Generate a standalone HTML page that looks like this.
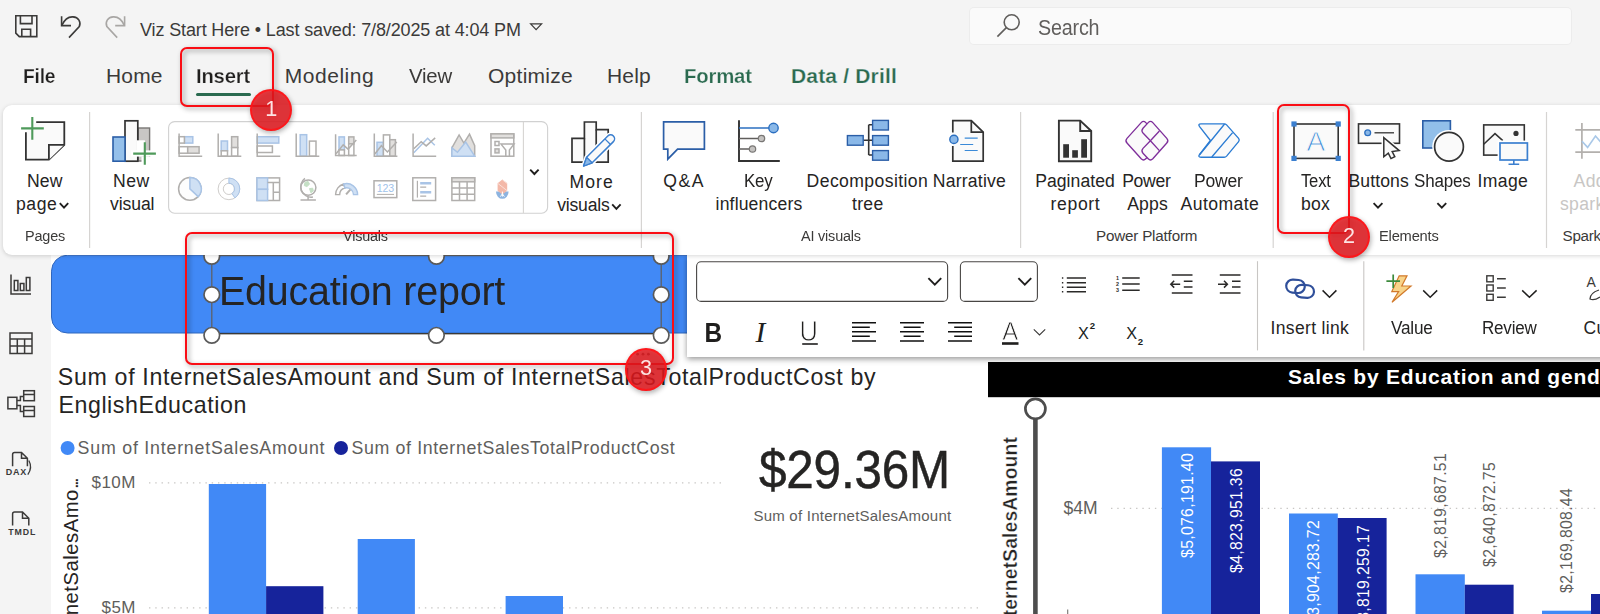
<!DOCTYPE html>
<html><head><meta charset="utf-8"><title>Power BI Desktop</title>
<style>
html,body{margin:0;padding:0;}
body{width:1600px;height:614px;overflow:hidden;position:relative;background:#f4f4f4;font-family:"Liberation Sans",sans-serif;}
.t{position:absolute;white-space:nowrap;line-height:1;}
.abs{position:absolute;}
.layer{position:absolute;left:0;top:0;width:1600px;height:614px;overflow:hidden;}
svg{position:absolute;left:0;top:0;overflow:visible;}
.rot{position:absolute;white-space:nowrap;line-height:1;transform-origin:0 0;transform:rotate(-90deg) translate(-100%,0);}
.dl{font-size:15.8px;letter-spacing:.3px}
</style></head><body>
<!-- ===== canvas layer ===== -->
<div class="layer" id="canvas">
<div class="abs" style="left:51px;top:250px;width:1549px;height:364px;background:#fff"></div>
<svg width="1600" height="614" viewBox="0 0 1600 614">
<!-- blue banner -->
<path d="M67.5 255.2H700V333H67.5A16 16 0 0 1 51.5 317V271.2A16 16 0 0 1 67.5 255.2Z" fill="#4189f6" stroke="#2f66bd" stroke-width="1"/>
<!-- text box frame -->
<rect x="211.8" y="255.6" width="449.4" height="78" fill="none" stroke="#605e5c" stroke-width="1.2"/>
<line x1="212" y1="333.6" x2="661" y2="333.6" stroke="#3b3a39" stroke-width="1.4"/>
<g fill="#fff" stroke="#5a5a5a" stroke-width="1.7">
<circle cx="211.8" cy="256.3" r="7.8"/><circle cx="436.4" cy="256.3" r="7.8"/><circle cx="661.2" cy="256.3" r="7.8"/>
<circle cx="211.8" cy="294.7" r="7.8"/><circle cx="661.2" cy="294.7" r="7.8"/>
<circle cx="211.8" cy="335.3" r="7.8"/><circle cx="436.4" cy="335.3" r="7.8"/><circle cx="661.2" cy="335.3" r="7.8"/>
</g>
<g fill="#605e5c"><circle cx="637.6" cy="354.2" r="1.4"/><circle cx="643" cy="354.2" r="1.4"/><circle cx="648.4" cy="354.2" r="1.4"/></g>
<!-- left chart -->
<circle cx="67.6" cy="448" r="7" fill="#4189f6"/>
<circle cx="341" cy="448" r="7" fill="#16239b"/>
<g stroke="#c8c6c4" stroke-width="1.3" stroke-dasharray="1.4 4.87" fill="none">
<line x1="149" y1="482.8" x2="722" y2="482.8"/>
<line x1="149" y1="607.8" x2="980" y2="607.8"/>
<line x1="1111" y1="508.3" x2="1600" y2="508.3"/>
</g>
<g fill="#4189f6">
<rect x="208.8" y="484" width="57.3" height="140"/>
<rect x="357.7" y="539" width="57.2" height="80"/>
<rect x="505.6" y="596" width="57.4" height="30"/>
</g>
<rect x="266.1" y="586.2" width="57.3" height="40" fill="#16239b"/>
<!-- right chart -->
<rect x="988" y="362" width="620" height="35.2" fill="#000"/>
<rect x="1033.1" y="417" width="4.6" height="200" fill="#4d4d4d"/>
<circle cx="1035.4" cy="408.8" r="10" fill="#fff" stroke="#4d4d4d" stroke-width="2.7"/>
<g fill="#4189f6">
<rect x="1161.9" y="447.3" width="49.2" height="170"/>
<rect x="1289" y="513.5" width="48.8" height="110"/>
<rect x="1415.5" y="574.3" width="49.3" height="50"/>
<rect x="1542" y="610.7" width="49" height="10"/>
</g>
<g fill="#16239b">
<rect x="1211" y="461.4" width="49" height="160"/>
<rect x="1337.7" y="518" width="48.9" height="100"/>
<rect x="1464.8" y="584.7" width="48.8" height="40"/>
<rect x="1591" y="594" width="20" height="30"/>
</g>
<rect x="1067" y="609.5" width="1.3" height="5" fill="#8a8886"/>
<!-- left nav icons -->
<g fill="none" stroke="#3b3a39" stroke-width="1.5">
<path d="M11 274.5V294H31"/><rect x="14.3" y="280.5" width="3.6" height="10"/><rect x="20.3" y="283.5" width="3.6" height="7"/><rect x="26.3" y="277.5" width="3.6" height="13"/>
<rect x="10" y="333" width="22" height="20.5"/><path d="M10 339H32M10 346H32M17.3 339V353.5M24.6 339V353.5"/>
<rect x="7.9" y="397.3" width="9" height="11.5"/><rect x="23.7" y="390.7" width="10.7" height="10"/><rect x="23.7" y="406.5" width="10.7" height="10"/><path d="M23.7 394.6H34.4M23.7 410.4H34.4M16.9 400.5H20.4V396.4H23.7M16.9 405.5H20.4V411.4H23.7"/>
<path d="M12.6 466.2V454.4A2 2 0 0 1 14.6 452.4H21.5L27.4 458.3V466.2M21.5 452.4V458.3H27.4"/><path d="M28.8 460.5Q32.8 467.5 27.8 474.6" stroke-width="1.3"/>
<path d="M12.6 525.6V514A2 2 0 0 1 14.6 512H22.5L28.8 518.3V525.6M22.5 512V518.3H28.8"/>
</g>
</svg>

<span class="t" style="left:219.06px;top:271.87px;font-size:40.2px;color:#252423;letter-spacing:-0.200px;transform:scaleX(0.9809);transform-origin:0 50%;">Education report</span>
<span class="t" style="left:57.80px;top:366.36px;font-size:23.2px;color:#252423;letter-spacing:0.663px;">Sum of InternetSalesAmount and Sum of InternetSalesTotalProductCost by</span>
<span class="t" style="left:58.40px;top:394.36px;font-size:23.2px;color:#252423;letter-spacing:0.581px;">EnglishEducation</span>
<span class="t" style="left:77.60px;top:439.93px;font-size:17.8px;color:#605e5c;letter-spacing:0.785px;">Sum of InternetSalesAmount</span>
<span class="t" style="left:351.60px;top:439.93px;font-size:17.8px;color:#605e5c;letter-spacing:0.620px;">Sum of InternetSalesTotalProductCost</span>
<span class="t" style="left:91.60px;top:474.21px;font-size:17px;color:#605e5c;letter-spacing:0.412px;">$10M</span>
<span class="t" style="left:101.60px;top:598.71px;font-size:17px;color:#605e5c;letter-spacing:0.345px;">$5M</span>
<span class="t" style="left:758.60px;top:441.69px;font-size:54px;color:#252423;letter-spacing:-0.200px;transform:scaleX(0.9153);transform-origin:0 50%;-webkit-text-stroke:.5px #252423;">$29.36M</span>
<span class="t" style="left:753.40px;top:507.90px;font-size:15px;color:#605e5c;letter-spacing:0.240px;">Sum of InternetSalesAmount</span>
<span class="t" style="left:1288.00px;top:366.22px;font-size:21px;color:#ffffff;font-weight:700;letter-spacing:0.773px;">Sales by Education and gender</span>
<span class="t" style="left:1063.60px;top:500.49px;font-size:17.5px;color:#605e5c;letter-spacing:-0.033px;">$4M</span>
<span class="t" style="left:5.80px;top:467.78px;font-size:9px;color:#3b3a39;font-weight:700;letter-spacing:0.700px;">DAX</span>
<span class="t" style="left:8.20px;top:528.35px;font-size:8.8px;color:#3b3a39;font-weight:700;letter-spacing:0.915px;">TMDL</span>
<span class="rot" style="left:61.3px;top:480.4px;font-size:20.3px;color:#252423;letter-spacing:.5px">Sum of InternetSalesAmo<span style="letter-spacing:-2.6px">...</span></span>
<span class="rot" style="left:1001px;top:436.6px;font-size:19.3px;font-weight:700;color:#252423;letter-spacing:.15px;-webkit-text-stroke:.35px #fff">Sum of InternetSalesAmount</span>
<span class="rot dl" style="left:1180.4px;top:453px;color:#fff;">$5,076,191.40</span>
<span class="rot dl" style="left:1228.8px;top:467.6px;color:#fff;">$4,823,951.36</span>
<span class="rot dl" style="left:1306.4px;top:520px;color:#fff;">$3,904,283.72</span>
<span class="rot dl" style="left:1355.6px;top:524.7px;color:#fff;">$3,819,259.17</span>
<span class="rot dl" style="left:1433.3px;top:452.8px;color:#605e5c;">$2,819,687.51</span>
<span class="rot dl" style="left:1482.1px;top:461.8px;color:#605e5c;">$2,640,872.75</span>
<span class="rot dl" style="left:1559.4px;top:488.2px;color:#605e5c;">$2,169,808.44</span>

</div>
<!-- ===== format toolbar ===== -->
<div class="layer" id="fmt">
<div class="abs" style="left:687px;top:255px;width:920px;height:101.5px;background:#fff;box-shadow:0 2px 6px rgba(0,0,0,.42)"></div>
<svg width="1600" height="614" viewBox="0 0 1600 614">
<!-- dropdowns -->
<rect x="696.6" y="261.8" width="251" height="39.6" rx="4.5" fill="#fff" stroke="#484644" stroke-width="1.1"/>
<rect x="960.4" y="261.8" width="77" height="39.6" rx="4.5" fill="#fff" stroke="#484644" stroke-width="1.1"/>
<g fill="none" stroke="#201f1e" stroke-width="1.9"><path d="M928.4 278.2L934.8 284.6L941.2 278.2"/><path d="M1018.4 278.2L1024.8 284.6L1031.2 278.2"/></g>
<!-- U underline + A bar -->
<rect x="802.2" y="343.2" width="15.6" height="1.6" fill="#201f1e"/>
<rect x="1002" y="342.2" width="16.5" height="2.6" fill="#201f1e"/>
<!-- align icons -->
<g stroke="#111" stroke-width="1.5" fill="none">
<path d="M852 322.7H876M852 327.2H869.8M852 331.7H876M852 336.2H869.8M852 341H876"/>
<path d="M900 322.7H924M903.6 327.2H920.6M900 331.7H924M903.6 336.2H920.6M900 341H924"/>
<path d="M948 322.7H972M954.2 327.2H972M948 331.7H972M954.2 336.2H972M948 341H972"/>
</g>
<path d="M1033.8 329.4L1039.5 335L1045.2 329.4" fill="none" stroke="#3b3a39" stroke-width="1.1"/>
<!-- list icons -->
<g stroke="#2b2a29" stroke-width="1.5" fill="none">
<path d="M1066.8 278H1086M1066.8 282.7H1086M1066.8 287.2H1086M1066.8 291.7H1086"/>
<path d="M1061.9 278H1063.3M1061.9 282.7H1063.3M1061.9 287.2H1063.3M1061.9 291.7H1063.3"/>
<path d="M1122.2 278H1139.7M1122.2 284H1139.7M1122.2 290.2H1139.7"/>
<path d="M1171.8 275H1192.5M1171.8 293H1192.5M1183.8 281.2H1192.5M1183.8 287H1192.5M1170.8 284.2H1180.2M1174.2 280.8L1170.8 284.2L1174.2 287.6"/>
<path d="M1219.8 275H1240.5M1219.8 293H1240.5M1232 281.2H1240.5M1232 287H1240.5M1218 284.2H1227.4M1224 280.8L1227.4 284.2L1224 287.6"/>
</g>
<!-- separators -->
<g stroke="#c8c6c4" stroke-width="1.1"><line x1="1257.5" y1="261.2" x2="1257.5" y2="350.4"/><line x1="1363.8" y1="261.2" x2="1363.8" y2="350.4"/></g>
<!-- link -->
<g fill="none" stroke="#2f4f9a" stroke-width="2.2"><rect x="1286.2" y="279.8" width="18.6" height="13" rx="6.5" transform="rotate(4 1295.5 286.3)"/><rect x="1295.2" y="285" width="18.8" height="12.6" rx="6.3" transform="rotate(4 1304.6 291.3)"/></g>
<g fill="none" stroke="#201f1e" stroke-width="1.5"><path d="M1322.6 290.4L1329.5 297.2L1336.4 290.4"/><path d="M1423.2 290.4L1430.2 297.2L1437.2 290.4"/><path d="M1522.2 290.4L1529.4 297.2L1536.6 290.4"/></g>
<!-- value -->
<path d="M1399.2 275.8H1407L1401.8 286H1411L1392 302.2L1398.6 291.6H1391.8Z" fill="#f8d48a" stroke="#d27a2c" stroke-width="1.2" stroke-linejoin="miter"/>
<path d="M1386.4 281.2H1400M1393.2 274.4V288" stroke="#3c8a3c" stroke-width="1.7" fill="none"/>
<!-- review -->
<g fill="none" stroke="#3b3a39" stroke-width="1.4"><rect x="1486.8" y="275.8" width="6.4" height="6"/><rect x="1486.8" y="285" width="6.4" height="6"/><rect x="1486.8" y="294.3" width="6.4" height="6"/><path d="M1497 278.8H1505.8M1497 288H1505.8M1497 297.3H1505.8"/></g>
<!-- Cu icon brush -->
<path d="M1599 290Q1590 293 1590 299Q1594 301 1600 297" fill="none" stroke="#3b3a39" stroke-width="1.3"/>
<text x="1586.6" y="287.2" font-family="'Liberation Sans', sans-serif" font-size="14" fill="#3b3a39">A</text>
<text font-family="'Liberation Sans', sans-serif" font-size="5.4" fill="#2b2a29" font-weight="700"><tspan x="1116" y="280">1</tspan><tspan x="1116" y="286">2</tspan><tspan x="1116" y="292.2">3</tspan></text>
</svg>

<span class="t" style="left:1270.60px;top:319.99px;font-size:17.5px;color:#252423;letter-spacing:0.326px;">Insert link</span>
<span class="t" style="left:1391.00px;top:319.99px;font-size:17.5px;color:#252423;letter-spacing:-0.200px;transform:scaleX(0.9829);transform-origin:0 50%;">Value</span>
<span class="t" style="left:1481.83px;top:319.99px;font-size:17.5px;color:#252423;letter-spacing:-0.200px;transform:scaleX(0.9725);transform-origin:0 50%;">Review</span>
<span class="t" style="left:1583.60px;top:319.99px;font-size:17.5px;color:#252423;letter-spacing:0.200px;">Custom</span>
<span class="t" style="left:703.80px;top:318.44px;font-size:28.3px;color:#201f1e;font-weight:700;transform:scaleX(.86);transform-origin:15% 50%;">B</span>
<span class="t" style="left:755.60px;top:317.83px;font-size:29.5px;color:#201f1e;font-style:italic;font-family:'Liberation Serif', serif;">I</span>
<span class="t" style="left:798.80px;top:316.24px;font-size:29.6px;color:#201f1e;-webkit-text-stroke:.9px #fff;transform:scaleX(.86);transform-origin:15% 50%;">U</span>
<span class="t" style="left:1001.80px;top:318.28px;font-size:26.6px;color:#201f1e;-webkit-text-stroke:.8px #fff;transform:scaleX(.9);transform-origin:15% 50%;">A</span>
<span class="t" style="left:1078.00px;top:325.09px;font-size:16.2px;color:#201f1e;">X</span>
<span class="t" style="left:1089.80px;top:320.97px;font-size:9.6px;color:#201f1e;font-weight:700;">2</span>
<span class="t" style="left:1126.20px;top:325.09px;font-size:16.2px;color:#201f1e;">X</span>
<span class="t" style="left:1137.80px;top:336.67px;font-size:9.6px;color:#201f1e;font-weight:700;">2</span>
</div>
<!-- ===== top + ribbon ===== -->
<div class="layer" id="top">
<div class="abs" style="left:0;top:0;width:1600px;height:105px;background:#f4f4f4"></div>
<div class="abs" style="left:970px;top:7.5px;width:601px;height:36px;background:#fafafa;border-radius:4px;box-shadow:0 0 0 1px #ececec"></div>
<div class="abs" style="left:196px;top:93px;width:55px;height:3.2px;border-radius:2px;background:#2a6a4f"></div>
<span class="t" style="left:140.00px;top:20.76px;font-size:18px;color:#3b3a39;letter-spacing:-0.132px;">Viz Start Here • Last saved: 7/8/2025 at 4:04 PM</span>
<span class="t" style="left:1038.20px;top:16.92px;font-size:21.6px;color:#605e5c;letter-spacing:-0.200px;transform:scaleX(0.9127);transform-origin:0 50%;">Search</span>
<span class="t" style="left:23.07px;top:65.32px;font-size:21px;color:#201f1e;font-weight:700;letter-spacing:-0.200px;transform:scaleX(0.9150);transform-origin:0 50%;-webkit-text-stroke:.25px #f4f4f4;">File</span>
<span class="t" style="left:106.00px;top:65.32px;font-size:21px;color:#3b3a39;letter-spacing:0.154px;">Home</span>
<span class="t" style="left:195.83px;top:65.32px;font-size:21px;color:#201f1e;font-weight:700;letter-spacing:-0.200px;transform:scaleX(0.9640);transform-origin:0 50%;-webkit-text-stroke:.25px #f4f4f4;">Insert</span>
<span class="t" style="left:284.80px;top:65.32px;font-size:21px;color:#3b3a39;letter-spacing:0.523px;">Modeling</span>
<span class="t" style="left:409.00px;top:65.32px;font-size:21px;color:#3b3a39;letter-spacing:-0.200px;transform:scaleX(0.9700);transform-origin:0 50%;">View</span>
<span class="t" style="left:488.00px;top:65.32px;font-size:21px;color:#3b3a39;letter-spacing:0.261px;">Optimize</span>
<span class="t" style="left:607.00px;top:65.32px;font-size:21px;color:#3b3a39;letter-spacing:0.163px;">Help</span>
<span class="t" style="left:684.04px;top:65.32px;font-size:21px;color:#2a6a4f;font-weight:700;letter-spacing:-0.200px;transform:scaleX(0.9686);transform-origin:0 50%;-webkit-text-stroke:.25px #f4f4f4;">Format</span>
<span class="t" style="left:791.00px;top:65.32px;font-size:21px;color:#2a6a4f;font-weight:700;letter-spacing:0.179px;-webkit-text-stroke:.25px #f4f4f4;">Data / Drill</span>
<div class="abs" style="left:2.5px;top:105px;width:1620px;height:149.8px;background:#fff;border-radius:9px;box-shadow:0 1px 4px rgba(0,0,0,.16)"></div>
<svg width="1600" height="614" viewBox="0 0 1600 614">
<!-- title bar icons -->
<g fill="none" stroke="#3b3a39" stroke-width="1.6">
<path d="M15.8 15.8H36.8V36.6H19.3L15.8 33.1Z"/><path d="M20.4 15.8V23.6H32V15.8"/><path d="M21.8 36.6V29.2H30.6V36.6"/>
<path d="M61.6 16.3V25.6H71"/><path d="M61.8 25.4C64.5 19.5 69 16.6 73 16.9C78.5 17.3 81.3 22 79.3 26.6L69 37.6"/>
</g>
<g fill="none" stroke="#a8a6a4" stroke-width="1.6">
<path d="M124.6 16.3V25.6H115.2"/><path d="M124.4 25.4C121.7 19.5 117.2 16.6 113.2 16.9C107.7 17.3 104.9 22 106.9 26.6L117.2 37.6"/>
</g>
<path d="M530.6 23.8H541.6L536.1 29.6Z" fill="none" stroke="#3b3a39" stroke-width="1.2"/>
<g fill="none" stroke="#605e5c" stroke-width="1.6"><circle cx="1011.7" cy="22.3" r="7.5"/><path d="M1006.4 27.6L997.4 36.6"/></g>
<!-- group separators -->
<g stroke="#d6d4d2" stroke-width="1.2">
<line x1="89.6" y1="112" x2="89.6" y2="248"/><line x1="641.4" y1="112" x2="641.4" y2="248"/><line x1="1020.6" y1="112" x2="1020.6" y2="248"/><line x1="1273.2" y1="112" x2="1273.2" y2="248"/><line x1="1546.5" y1="112" x2="1546.5" y2="248"/>
</g>
<!-- chevrons -->
<g fill="none" stroke="#201f1e" stroke-width="1.9">
<path d="M59.8 203.2L64 207.6L68.2 203.2"/><path d="M612.2 204.4L616.4 208.8L620.6 204.4"/><path d="M1373.6 203.2L1378 207.6L1382.4 203.2"/><path d="M1437.4 203.2L1441.8 207.6L1446.2 203.2"/>
</g>
<!-- New page -->
<path d="M36.2 122.1H64.3V144.8L48.9 159.7H25.9V132.2" fill="#fafafa" stroke="none"/>
<g fill="none" stroke="#333" stroke-width="1.8"><path d="M36.2 122.1H64.3V144.8L48.9 159.7H25.9V132.2"/><path d="M48.9 159.7V144.8H64.3" fill="#fafafa"/></g>
<path d="M21.1 128.4H43.8M32.3 117.1V139.8" stroke="#4f9a5b" stroke-width="2.1" fill="none"/>
<!-- New visual -->
<rect x="138" y="128" width="11.6" height="33" fill="#c8c6c4" stroke="#797775" stroke-width="1.4"/>
<rect x="125" y="120.8" width="12.8" height="40.4" fill="#fafafa" stroke="#333" stroke-width="1.7"/>
<rect x="113" y="137" width="12" height="24.2" fill="#95c0ea" stroke="#2b5ea7" stroke-width="1.6"/>
<rect x="136.6" y="140.3" width="8.3" height="11" fill="#fff"/><rect x="131" y="150.4" width="26" height="6.2" fill="#fff"/><rect x="141.5" y="156.6" width="9.5" height="6.4" fill="#fff"/>
<path d="M133.2 153.6H155.9M144.8 142.3V164.8" stroke="#4f9a5b" stroke-width="2.1" fill="none"/>
<!-- gallery box -->
<rect x="168.6" y="121.6" width="379" height="91.6" rx="6" fill="#fff" stroke="#d1d1d1" stroke-width="1.1"/>
<line x1="523.4" y1="122" x2="523.4" y2="213" stroke="#d6d4d2" stroke-width="1.1"/>
<g transform="translate(178.2 133.3)" fill="none" stroke="#b1afad" stroke-width="1.5"><rect x="6.2" y="3.4" width="8.4" height="6.4" fill="#cfe0f4" stroke="#a9c4e6"/><rect x="0.9" y="3.4" width="5.3" height="6.4" fill="#fff"/><rect x="0.9" y="13.4" width="8.6" height="6.5" fill="#fff"/><rect x="9.5" y="13.4" width="11.4" height="6.5" fill="#e1dfdd"/><path d="M0.9 0.3V22.9H24"/></g>
<g transform="translate(217.3 133.3)" fill="none" stroke="#b1afad" stroke-width="1.5"><rect x="3.9" y="7.7" width="6.3" height="9.8" fill="#cfe0f4" stroke="#a9c4e6"/><rect x="3.9" y="17.5" width="6.3" height="5.4" fill="#fff"/><rect x="14.3" y="3.4" width="6.2" height="10.9" fill="#e1dfdd"/><rect x="14.3" y="14.3" width="6.2" height="8.6" fill="#fff"/><path d="M0.9 0.3V22.9H24"/></g>
<g transform="translate(256.3 133.3)" fill="none" stroke="#b1afad" stroke-width="1.5"><rect x="0.9" y="3.4" width="21.6" height="6.4" fill="#cfe0f4" stroke="#a9c4e6"/><rect x="0.9" y="12.7" width="15.2" height="6.5" fill="#fff"/><path d="M0.9 0.3V22.9H24"/></g>
<g transform="translate(295.3 133.3)" fill="none" stroke="#b1afad" stroke-width="1.5"><rect x="4.9" y="1.4" width="6.5" height="21.5" fill="#cfe0f4" stroke="#a9c4e6"/><rect x="14.1" y="7.8" width="6.6" height="15.1" fill="#fff"/><path d="M0.9 0.3V22.9H24"/></g>
<g transform="translate(334.7 133.3)" fill="none" stroke="#b1afad" stroke-width="1.5"><rect x="4.3" y="3.6" width="5.4" height="13" fill="#cfe0f4" stroke="#a9c4e6"/><rect x="4.3" y="16.6" width="5.4" height="5.6" fill="#fff"/><rect x="14" y="3.6" width="5.2" height="7" fill="#e1dfdd"/><rect x="14" y="10.6" width="5.2" height="11.6" fill="#fff"/><path d="M1.4 20.4L8.5 11.6L13.4 15.8L21.6 6.6"/><path d="M0.9 1V22.2H22"/></g>
<g transform="translate(373.4 133.3)" fill="none" stroke="#b1afad" stroke-width="1.5"><rect x="3.6" y="9" width="6.4" height="13.9" fill="#cfe0f4" stroke="#a9c4e6"/><rect x="10" y="1.6" width="6.4" height="21.3" fill="#fff"/><rect x="16.4" y="6.4" width="5.6" height="16.5" fill="#e1dfdd"/><path d="M1.2 21L8 12.4L14 18.6L23.4 8.6"/><path d="M0.9 0.3V22.9H24"/></g>
<g transform="translate(412.2 133.3)" fill="none" stroke="#b1afad" stroke-width="1.5"><path d="M1.6 19.4L15.4 5L22.6 12" stroke="#a9c4e6"/><path d="M1.6 15.4L9 8.4L14 12.6L23 4.6"/><path d="M0.9 0.3V22.9H24"/></g>
<g transform="translate(451.3 133.3)" fill="none" stroke="#b1afad" stroke-width="1.5"><path d="M0.6 14.6L7.8 1.6L12.6 9.8L18.2 0.8L23.4 12.4V22.9H0.6Z" fill="#e1dfdd"/><path d="M0.6 14.6L6.2 19L14.4 8.8L23.4 22.9H0.6Z" fill="#cfe0f4" stroke="#a9c4e6"/></g>
<g transform="translate(490.4 133.3)" fill="none" stroke="#b1afad" stroke-width="1.5"><rect x="0.6" y="0.6" width="22.8" height="22.3" fill="#fff"/><rect x="0.6" y="0.6" width="22.8" height="4" fill="#e1dfdd"/><rect x="4.6" y="8.2" width="4" height="4" /><rect x="4.6" y="15.6" width="4" height="4" fill="#e1dfdd"/><path d="M10.6 10.8H23.6L19 16.8V22.9H15.4V16.8Z" fill="#fff"/></g>
<g transform="translate(178.2 177.2)" fill="none" stroke="#b1afad" stroke-width="1.5"><circle cx="11.7" cy="11.7" r="11.3" fill="#fdfdfd"/><path d="M11.7 11.7V0.4A11.3 11.3 0 0 1 20 19.4Z" fill="#cfe0f4" stroke="#a9c4e6"/></g>
<g transform="translate(217.3 177.2)" fill="none" stroke="#b1afad" stroke-width="1.5"><g stroke="#cfcdcb" stroke-width="1"><circle cx="11.6" cy="11.7" r="10.8"/><circle cx="11.6" cy="11.7" r="5.6"/></g><path d="M11.6 0.9A10.8 10.8 0 0 1 17.6 20.7L14.7 16.4A5.6 5.6 0 0 0 11.6 6.1Z" fill="#cfe0f4" stroke="#a9c4e6" stroke-width="1"/></g>
<g transform="translate(256.3 177.2)" fill="none" stroke="#b1afad" stroke-width="1.5"><rect x="0.7" y="0.7" width="22.6" height="22.6" fill="#fff"/><rect x="0.7" y="0.7" width="10.6" height="11.4" fill="#cfe0f4" stroke="#a9c4e6"/><rect x="0.7" y="12.1" width="10.6" height="11.2" fill="#cfe0f4" stroke="#a9c4e6"/><path d="M11.3 5.2H23.3M17 5.2V23.3M17 15H23.3"/></g>
<g transform="translate(295.3 177.2)" fill="none" stroke="#b1afad" stroke-width="1.5"><circle cx="13" cy="10.4" r="7.6" fill="#fff"/><path d="M9.6 5.2L12.8 4.2L14.2 7L11.6 9.4L9 8.4ZM14.2 11.4L17.4 11L18 13.6L15.6 15.6Z" fill="#c5e0c5" stroke="#c5e0c5" stroke-width="1"/><path d="M9.6 1.2A10.4 10.4 0 0 0 17.6 19.8"/><path d="M12.8 19.6V22.6M5.2 22.8H20.6"/></g>
<g transform="translate(334.7 177.2)" fill="none" stroke="#b1afad" stroke-width="1.5"><path d="M0.9 17.4A11 11 0 0 1 9 6.8L10.2 10.8A7 7 0 0 0 5 17.4Z" fill="#fff" stroke-width="1.4"/><path d="M9 6.8A11 11 0 0 1 22.9 17.4H18.8A7 7 0 0 0 10.2 10.8Z" fill="#cfe0f4" stroke="#a9c4e6" stroke-width="1.4"/><path d="M11.4 17.2L15.6 12.4" stroke-width="2"/></g>
<g transform="translate(373.4 177.2)" fill="none" stroke="#b1afad" stroke-width="1.5"><rect x="0.6" y="3.6" width="22.8" height="16.8" fill="#fff"/><path d="M3.4 17.2H20.6" stroke-width="1"/><text x="12" y="14.6" font-family="'Liberation Sans', sans-serif" font-size="10.6" fill="#9fc3ea" stroke="none" text-anchor="middle" letter-spacing="-.2">123</text></g>
<g transform="translate(412.2 177.2)" fill="none" stroke="#b1afad" stroke-width="1.5"><rect x="0.6" y="0.6" width="22.8" height="22.7" fill="#fff"/><path d="M5.2 3.6V20.4" stroke-width="1.2"/><path d="M8 6H19M8 15H19" stroke="#a9c4e6" stroke-width="2.4"/><path d="M8 10H14M8 19H14" stroke-width="1.2"/></g>
<g transform="translate(451.3 177.2)" fill="none" stroke="#b1afad" stroke-width="1.5"><rect x="0.6" y="0.6" width="22.8" height="22.7" fill="#fff"/><rect x="0.6" y="0.6" width="22.8" height="4" fill="#e1dfdd"/><path d="M0.6 10.8H23.4M0.6 17H23.4M8.2 4.6V23.3M15.8 4.6V23.3"/></g>
<g transform="translate(490.4 177.2)" fill="none" stroke="#b1afad" stroke-width="1.5"><path d="M5.6 14.2A6.3 7.4 0 0 0 18.2 14.2Z" fill="#8db4e0" stroke="none"/><path d="M12 2.4L16.8 6V13.6L12 17.2L7.2 13.6V6Z" fill="#f3b8a8" stroke="none"/><path d="M7.4 6.2L16.6 13.4M12 2.6L16.6 6.2" stroke="#fbe0d8" stroke-width="1"/><path d="M12 14.4V19.4M10 19.4L12 16.6L14 19.4" stroke="#fff" stroke-width="1" fill="none"/></g>
<path d="M530.2 169.6L534.4 174L538.6 169.6" fill="none" stroke="#201f1e" stroke-width="1.9"/>
<!-- More visuals -->
<g fill="#fafafa" stroke="#333" stroke-width="1.7"><path d="M572 162.2V138.4H584.4V122H596.2V129.6H608.2V162.2Z"/><path d="M584.4 138.4V162.2M596.2 129.6V162.2" /></g>
<g><path d="M583.6 166L586.6 157.2L607.8 136A3.9 3.9 0 0 1 613.4 141.6L592.2 162.8Z" fill="#fff" stroke="#fff" stroke-width="4.5"/>
<path d="M583.6 166L586.6 157.2L607.8 136A3.9 3.9 0 0 1 613.4 141.6L592.2 162.8Z" fill="#fafafa" stroke="#3b7fcf" stroke-width="1.5" stroke-linejoin="round"/>
<path d="M583.6 166L586.6 157.2L592.2 162.8Z" fill="#8ab8e8" stroke="#3b7fcf" stroke-width="1.3" stroke-linejoin="round"/><path d="M604.9 138.9L610.5 144.5" stroke="#3b7fcf" stroke-width="1.3"/></g>
<!-- Q&A -->
<path d="M663.6 121.8H704.4V149.2H677.6L667.8 159.2V149.2H663.6Z" fill="#fafafa" stroke="#2b5ea7" stroke-width="1.7"/>
<!-- Key influencers -->
<g fill="none"><path d="M739 120.2V161H779.8" stroke="#333" stroke-width="1.9"/>
<path d="M739 128H769" stroke="#2b6fc0" stroke-width="1.5"/><path d="M739 138.5H758.5M739 149H749.5" stroke="#605e5c" stroke-width="1.4"/>
<circle cx="773.5" cy="128" r="4.7" fill="#8ab8e8" stroke="#2b6fc0" stroke-width="1.4"/><circle cx="761.5" cy="138.5" r="3.2" fill="#c4c2c0" stroke="#797775" stroke-width="1.2"/><circle cx="752.5" cy="149" r="3.2" fill="#c4c2c0" stroke="#797775" stroke-width="1.2"/></g>
<!-- Decomposition tree -->
<path d="M863.3 140.3H872.4M868.7 124.7V155M868.7 124.7H872.4M868.7 155H872.4" stroke="#333" stroke-width="1.6" fill="none"/>
<g fill="#8ab8e8" stroke="#2b5ea7" stroke-width="1.4"><rect x="847.4" y="135.6" width="15.8" height="9.6"/><rect x="872.6" y="120.4" width="15.8" height="9.6"/><rect x="872.6" y="135.6" width="15.8" height="9.6"/><rect x="872.6" y="150.6" width="15.8" height="9.6"/></g>
<!-- Narrative -->
<path d="M952.8 132.5V120.6H971.3L983.2 132.2V161.2H952.8V146" fill="#fafafa" stroke="#333" stroke-width="1.7"/><path d="M971.3 120.6V132.2H983.2" fill="none" stroke="#333" stroke-width="1.7"/>
<circle cx="953.9" cy="139.4" r="4.1" fill="#8ab8e8" stroke="#2b6fc0" stroke-width="1.4"/>
<path d="M964.7 138.2H977.7M960.2 144.5H973.2M964.7 150.5H977.7" stroke="#3b8ad8" stroke-width="1.2" fill="none"/>
<!-- Paginated report -->
<path d="M1058.9 120.6H1080.2L1091.2 131V161.2H1058.9Z" fill="#fafafa" stroke="#333" stroke-width="1.9"/><path d="M1080.2 120.6V131H1091.2" fill="none" stroke="#333" stroke-width="1.9"/>
<g fill="#333"><rect x="1063.2" y="144.2" width="5.8" height="13.5"/><rect x="1072.2" y="150.2" width="5.7" height="7.5"/><rect x="1081.2" y="139.2" width="5.8" height="18.5"/></g>
<!-- Power Apps -->
<g fill="#fafafa" stroke="#7f2f9b" stroke-width="1.35" stroke-linejoin="round">
<path d="M1141.2 122.6Q1143.5 120.2 1145.8 122.6L1160.8 138.4Q1163 140.7 1160.8 143L1145.8 158.8Q1143.5 161.2 1141.2 158.8L1127 143Q1124.9 140.7 1127 138.4Z"/>
<path d="M1148.2 122.6Q1150.5 120.2 1152.8 122.6L1166.8 138.4Q1168.9 140.7 1166.8 143L1152.8 158.8Q1150.5 161.2 1148.2 158.8L1143 153.2Q1140.9 150.7 1143 148.4L1150.4 140.7L1143 133Q1140.9 130.7 1143 128.2Z"/>
<path d="M1150.4 140.7L1159.4 131M1150.4 140.7L1159.4 150.6" fill="none"/>
</g>
<!-- Power Automate -->
<g fill="#fafafa" stroke="#2b7cd3" stroke-width="1.35" stroke-linejoin="round">
<path d="M1201 123.8H1224.2Q1225.6 123.8 1226.6 124.9L1238.6 138.4Q1239.9 140 1238.6 141.6L1226.6 156.1Q1225.6 157.2 1224.2 157.2H1201Q1197.6 157.2 1199.6 154.4L1210.4 140.5L1199.6 126.6Q1197.6 123.8 1201 123.8Z"/>
<path d="M1224.6 124L1199.6 154.8M1232.6 132.6L1211.8 157" fill="none"/>
</g>
<!-- Text box -->
<rect x="1294" y="124" width="44.2" height="34.4" fill="#fafafa" stroke="#333" stroke-width="1.6"/>
<g fill="#3b7fcf"><rect x="1291.4" y="121.4" width="5.2" height="5.2"/><rect x="1335.6" y="121.4" width="5.2" height="5.2"/><rect x="1291.4" y="155.8" width="5.2" height="5.2"/><rect x="1335.6" y="155.8" width="5.2" height="5.2"/></g>
<text x="1315.9" y="151.2" font-family="'Liberation Sans', sans-serif" font-size="28" fill="#3b8ad8" text-anchor="middle" stroke="#fafafa" stroke-width=".9">A</text>
<!-- Buttons -->
<rect x="1358.5" y="123.9" width="41" height="19.4" fill="#fafafa" stroke="#333" stroke-width="1.6"/>
<circle cx="1367.7" cy="132.8" r="2.9" fill="#8ab8e8" stroke="#2b6fc0" stroke-width="1.3"/><path d="M1374.5 132.8H1394" stroke="#333" stroke-width="1.3"/>
<path d="M1383.8 137.7V156.8L1388.3 153.2L1391 158.6L1394.8 156.6L1392.2 151.6L1399.2 150.6Z" fill="#fff" stroke="#fff" stroke-width="4.5" stroke-linejoin="round"/>
<path d="M1383.8 137.7V156.8L1388.3 153.2L1391 158.6L1394.8 156.6L1392.2 151.6L1399.2 150.6Z" fill="#fafafa" stroke="#333" stroke-width="1.5" stroke-linejoin="miter"/>
<!-- Shapes -->
<rect x="1422.8" y="120.8" width="27.6" height="27.2" fill="#92bfe9" stroke="#2b5ea7" stroke-width="1.6"/>
<circle cx="1449" cy="146.7" r="16.8" fill="#fff"/><circle cx="1449" cy="146.7" r="14.4" fill="#fafafa" stroke="#333" stroke-width="1.7"/>
<!-- Image -->
<rect x="1483.7" y="124.9" width="40.6" height="30.2" fill="#fafafa" stroke="#333" stroke-width="1.6"/>
<path d="M1483.7 144.3L1495 133.6L1502.8 140.6" fill="none" stroke="#333" stroke-width="1.5"/><circle cx="1516" cy="133.4" r="2.6" fill="#333"/>
<rect x="1497.6" y="140.6" width="32" height="22" fill="#fff"/>
<rect x="1500" y="143" width="27.4" height="17" fill="#fafafa" stroke="#3b7fcf" stroke-width="1.7"/><path d="M1513.8 160V164M1508.5 164.2H1519.2" stroke="#3b7fcf" stroke-width="1.6" fill="none"/>
<!-- Sparkline (disabled) -->
<path d="M1581.9 123.1V158.7M1575.3 129.9H1601M1575.3 152.2H1601" stroke="#b3b0ad" stroke-width="1.7" fill="none"/>
<path d="M1582 141.3L1587.6 147.4L1595.5 136L1601 142.4" stroke="#a9c8e8" stroke-width="1.6" fill="none"/>
</svg>

<span class="t" style="left:27.00px;top:172.80px;font-size:17.6px;color:#252423;letter-spacing:0.155px;">New</span>
<span class="t" style="left:16.00px;top:196.40px;font-size:17.6px;color:#252423;letter-spacing:0.549px;">page</span>
<span class="t" style="left:25.28px;top:227.93px;font-size:15.2px;color:#3b3a39;letter-spacing:-0.200px;transform:scaleX(0.9509);transform-origin:0 50%;">Pages</span>
<span class="t" style="left:113.00px;top:172.80px;font-size:17.6px;color:#252423;letter-spacing:0.455px;">New</span>
<span class="t" style="left:110.00px;top:196.40px;font-size:17.6px;color:#252423;letter-spacing:-0.094px;">visual</span>
<span class="t" style="left:569.40px;top:173.90px;font-size:17.6px;color:#252423;letter-spacing:1.100px;">More</span>
<span class="t" style="left:557.20px;top:196.50px;font-size:17.6px;color:#252423;letter-spacing:-0.197px;">visuals</span>
<span class="t" style="left:343.00px;top:227.93px;font-size:15.2px;color:#3b3a39;letter-spacing:-0.200px;transform:scaleX(0.9484);transform-origin:0 50%;">Visuals</span>
<span class="t" style="left:663.20px;top:172.80px;font-size:17.6px;color:#252423;letter-spacing:1.590px;">Q&amp;A</span>
<span class="t" style="left:744.24px;top:172.80px;font-size:17.6px;color:#252423;letter-spacing:-0.200px;transform:scaleX(0.9615);transform-origin:0 50%;">Key</span>
<span class="t" style="left:715.60px;top:196.40px;font-size:17.6px;color:#252423;letter-spacing:0.151px;">influencers</span>
<span class="t" style="left:806.60px;top:172.80px;font-size:17.6px;color:#252423;letter-spacing:0.401px;">Decomposition</span>
<span class="t" style="left:852.00px;top:196.40px;font-size:17.6px;color:#252423;letter-spacing:0.289px;">tree</span>
<span class="t" style="left:932.80px;top:172.80px;font-size:17.6px;color:#252423;letter-spacing:0.202px;">Narrative</span>
<span class="t" style="left:800.60px;top:227.93px;font-size:15.2px;color:#3b3a39;letter-spacing:-0.200px;transform:scaleX(0.9500);transform-origin:0 50%;">AI visuals</span>
<span class="t" style="left:1035.20px;top:172.80px;font-size:17.6px;color:#252423;letter-spacing:0.043px;">Paginated</span>
<span class="t" style="left:1050.60px;top:196.40px;font-size:17.6px;color:#252423;letter-spacing:0.626px;">report</span>
<span class="t" style="left:1122.20px;top:172.80px;font-size:17.6px;color:#252423;letter-spacing:-0.303px;">Power</span>
<span class="t" style="left:1127.20px;top:196.40px;font-size:17.6px;color:#252423;letter-spacing:0.165px;">Apps</span>
<span class="t" style="left:1194.01px;top:172.80px;font-size:17.6px;color:#252423;letter-spacing:-0.200px;transform:scaleX(0.9959);transform-origin:0 50%;">Power</span>
<span class="t" style="left:1180.60px;top:196.40px;font-size:17.6px;color:#252423;letter-spacing:0.411px;">Automate</span>
<span class="t" style="left:1096.00px;top:227.93px;font-size:15.2px;color:#3b3a39;letter-spacing:-0.182px;">Power Platform</span>
<span class="t" style="left:1301.20px;top:172.80px;font-size:17.6px;color:#252423;letter-spacing:-0.200px;transform:scaleX(0.9446);transform-origin:0 50%;">Text</span>
<span class="t" style="left:1301.00px;top:196.40px;font-size:17.6px;color:#252423;letter-spacing:0.215px;">box</span>
<span class="t" style="left:1348.40px;top:172.80px;font-size:17.6px;color:#252423;letter-spacing:0.122px;">Buttons</span>
<span class="t" style="left:1414.20px;top:172.80px;font-size:17.6px;color:#252423;letter-spacing:-0.200px;transform:scaleX(0.9654);transform-origin:0 50%;">Shapes</span>
<span class="t" style="left:1477.60px;top:172.80px;font-size:17.6px;color:#252423;letter-spacing:0.322px;">Image</span>
<span class="t" style="left:1379.05px;top:227.93px;font-size:15.2px;color:#3b3a39;letter-spacing:-0.200px;transform:scaleX(0.9657);transform-origin:0 50%;">Elements</span>
<span class="t" style="left:1573.60px;top:172.80px;font-size:17.6px;color:#c8c6c4;letter-spacing:0.300px;">Add</span>
<span class="t" style="left:1560.00px;top:196.40px;font-size:17.6px;color:#c8c6c4;letter-spacing:0.300px;">sparkline</span>
<span class="t" style="left:1562.60px;top:227.93px;font-size:15.2px;color:#3b3a39;letter-spacing:-0.300px;">Sparklines</span>
</div>
<!-- ===== annotations ===== -->
<div class="layer" id="anno">
<style>
.rb{position:absolute;border:2.2px solid #fa0d14;border-radius:7px;box-sizing:border-box;filter:drop-shadow(2px 2.2px 2.8px rgba(0,0,0,.42));}
.rc{position:absolute;width:42.4px;height:42.4px;border-radius:50%;background:rgba(228,24,30,.83);box-sizing:border-box;border:2px solid rgba(255,20,24,.9);color:#fde4e4;font-size:21.6px;line-height:35px;text-align:center;filter:drop-shadow(1.5px 2px 2.5px rgba(0,0,0,.35));}
</style>
<div class="rb" style="left:180px;top:46.6px;width:94.2px;height:60.3px"></div>
<div class="rb" style="left:1277px;top:104px;width:72.7px;height:130.3px"></div>
<div class="rb" style="left:185px;top:232.4px;width:488.7px;height:133px"></div>
<div class="rc" style="left:250.1px;top:88.8px">1</div>
<div class="rc" style="left:1327.9px;top:215.9px">2</div>
<div class="rc" style="left:624.7px;top:348.2px">3</div>

</div>
</body></html>
